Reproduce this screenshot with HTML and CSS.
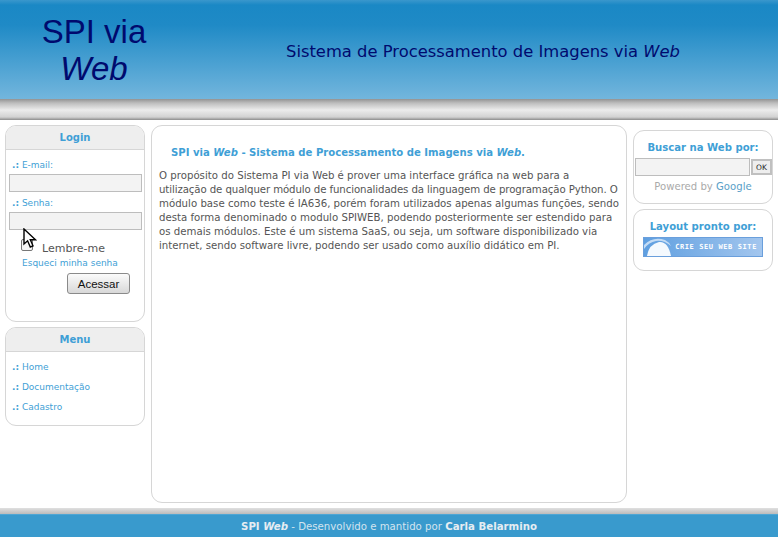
FILE: index.html
```html
<!DOCTYPE html>
<html lang="en">
<head>
    <meta charset="UTF-8">
    <title>SPI via Web</title>
    <link rel="stylesheet" href="styles.css">
</head>
<body>
    <div class="header">
        <h1 class="logo">SPI via<br><em>Web</em></h1>
        <h2 class="slogan">Sistema de Processamento de Imagens via <em>Web</em></h2>
    </div>
    <div class="header-bar"></div>

    <div class="columns">
        <div class="col-left">
            <div class="box login-box">
                <div class="box-title">Login</div>
                <div class="login-body">
                    <label class="field-label"><b>.:</b> E-mail:</label>
                    <input type="text" class="text-input">
                    <label class="field-label senha"><b>.:</b> Senha:</label>
                    <input type="password" class="text-input">
                    <div class="remember">
                        <span class="check"></span>
                        <span class="remember-text">Lembre-me</span>
                    </div>
                    <a class="forgot" href="#">Esqueci minha senha</a>
                    <div class="submit-row"><button class="submit-btn">Acessar</button></div>
                </div>
                <svg class="cursor" width="14" height="21" viewBox="0 0 14 21">
                    <path d="M1 1 L1 16 L4.6 12.8 L7.3 19 L10 17.8 L7.3 11.8 L12.5 11.8 Z" fill="#fff" stroke="#000" stroke-width="1.4"/>
                </svg>
            </div>
            <div class="box menu-box">
                <div class="box-title">Menu</div>
                <ul class="menu">
                    <li><b>.:</b> <a href="#">Home</a></li>
                    <li><b>.:</b> <a href="#">Documentação</a></li>
                    <li><b>.:</b> <a href="#">Cadastro</a></li>
                </ul>
            </div>
        </div>

        <div class="box col-main">
            <h3 class="main-title">SPI via <em>Web</em> - Sistema de Processamento de Imagens via <em>Web</em>.</h3>
            <p class="main-text">O propósito do Sistema PI via Web é prover uma interface gráfica na web para a<br>
            <span class="line-tight">utilização de qualquer módulo de funcionalidades da linguagem de programação Python. O</span><br>
            módulo base como teste é IA636, porém foram utilizados apenas algumas funções, sendo<br>
            desta forma denominado o modulo SPIWEB, podendo posteriormente ser estendido para<br>
            os demais módulos. Este é um sistema SaaS, ou seja, um software disponibilizado via<br>
            internet, sendo software livre, podendo ser usado como auxílio didático em PI.</p>
        </div>

        <div class="col-right">
            <div class="box search-box">
                <div class="side-title">Buscar na Web por:</div>
                <div class="search-row">
                    <input type="text" class="text-input search-input">
                    <button class="ok-btn">OK</button>
                </div>
                <div class="powered">Powered by <span>Google</span></div>
            </div>
            <div class="box layout-box">
                <div class="side-title">Layout pronto por:</div>
                <div class="banner">
                    <svg class="banner-art" width="32" height="18" viewBox="0 0 32 18">
                        <path d="M0 7 Q9 -2 21 2 Q25 4 27 8 Q20 2 12 3 Q5 4 0 11 Z" fill="#c4dcf5"/>
                        <path d="M3 18 Q5 6 15 4 Q24 3 27 18 Z" fill="#f4f9fe"/>
                    </svg>
                    <span class="banner-text">CRIE SEU WEB SITE</span>
                </div>
            </div>
        </div>
    </div>

    <div class="footer-bar"></div>
    <div class="footer"><b>SPI <em>Web</em></b> - Desenvolvido e mantido por <b>Carla Belarmino</b></div>
</body>
</html>
```

FILE: styles.css
```css
html, body {
    margin: 0;
    padding: 0;
}
body {
    font-family: "DejaVu Sans", Verdana, sans-serif;
    font-size: 10px;
    color: #555;
    background: #fff;
    height: 537px;
    overflow: hidden;
}
a {
    color: #3f9fd6;
    text-decoration: none;
}
.header {
    height: 99px;
    display: flex;
    background: linear-gradient(#3a97cc 0, #1a88c5 5px, #1f8ac6 25px, #73b6dd 99px);
    color: #000a6e;
}
.logo {
    width: 188px;
    margin: 13px 0 0;
    font-family: "Liberation Sans", Arial, sans-serif;
    font-size: 33px;
    line-height: 37px;
    font-weight: normal;
    text-align: center;
}
.slogan {
    margin: 42px 0 0 98px;
    font-size: 16.37px;
    line-height: 20px;
    font-weight: normal;
}
.header-bar {
    height: 21px;
    background: linear-gradient(#939393 0, #bdbdbd 4px, #ececec 11px, #d2d2d2 18px, #8c8c8c 21px);
}
.columns {
    display: flex;
    align-items: flex-start;
    gap: 6px;
    padding: 5px 5px 0;
    height: 383px;
}
.box {
    box-sizing: border-box;
    border: 1px solid #d6d6d6;
    border-radius: 11px;
    background: #fff;
}
.col-left, .col-right {
    width: 140px;
    display: flex;
    flex-direction: column;
    gap: 5px;
}
.col-right {
    padding-top: 5px;
}
.box-title {
    height: 23px;
    line-height: 23px;
    background: #eeeeee;
    border-bottom: 1px solid #d6d6d6;
    border-radius: 10px 10px 0 0;
    text-align: center;
    font-size: 10px;
    font-weight: bold;
    color: #3f9fd6;
}
.login-box {
    position: relative;
    height: 197px;
}
.login-body {
    padding: 9px 3px 0;
}
.field-label {
    display: block;
    padding-left: 3px;
    font-size: 9px;
    line-height: 12px;
    color: #3f9fd6;
}
.field-label b, .menu b {
    color: #3f9fd6;
}
.senha {
    margin-top: 5px;
}
.text-input {
    box-sizing: border-box;
    display: block;
    width: 133px;
    height: 18px;
    margin: 3px 0 0;
    border: 1px solid #bdbdbd;
    background: #f3f3f3;
    padding: 0;
}
.remember {
    display: flex;
    align-items: flex-start;
    gap: 9px;
    margin: 9px 0 0 12px;
    height: 12px;
    font-size: 11px;
    line-height: 13px;
    color: #555;
}
.remember-text {
    margin-top: 3px;
}
.check {
    box-sizing: border-box;
    flex: none;
    width: 12px;
    height: 12px;
    border: 1px solid #777;
    border-radius: 2px;
    background: #f5f5f5;
}
.forgot {
    display: block;
    margin: 5px 0 0 13px;
    font-size: 9px;
    line-height: 14px;
}
.submit-row {
    display: flex;
    justify-content: flex-end;
    padding-right: 11px;
    margin-top: 3px;
}
.submit-btn {
    width: 63px;
    height: 21px;
    padding: 0;
    border: 1px solid #8a8a8a;
    border-radius: 3px;
    background: linear-gradient(#fbfbfb, #d8d8d8);
    font-family: "Liberation Sans", Arial, sans-serif;
    font-size: 11.5px;
    color: #111;
}
.cursor {
    position: absolute;
    left: 17px;
    top: 102px;
}
.menu-box {
    height: 99px;
}
.menu {
    list-style: none;
    margin: 0;
    padding: 5px 0 0 6px;
    font-size: 9px;
}
.menu li {
    height: 20px;
    line-height: 20px;
    color: #3f9fd6;
}
.col-main {
    width: 476px;
    height: 378px;
    padding: 0 7px;
}
.main-title {
    margin: 20px 0 0 12px;
    font-size: 10.1px;
    line-height: 14px;
    font-weight: bold;
    color: #3f9fd6;
}
.main-text {
    margin: 9px 0 0;
    font-size: 10.2px;
    line-height: 14px;
    white-space: nowrap;
    color: #555;
}
.line-tight {
    letter-spacing: -0.1px;
}
.search-box {
    height: 74px;
}
.side-title {
    text-align: center;
    font-size: 10.1px;
    font-weight: bold;
    color: #3f9fd6;
    line-height: 14px;
    padding-top: 10px;
}
.search-row {
    display: flex;
    gap: 1px;
    margin: 3px 0 0 1px;
}
.search-input {
    width: 115px;
    height: 18px;
    margin: 0;
}
.ok-btn {
    box-sizing: border-box;
    width: 21px;
    height: 16px;
    margin-top: 1px;
    padding: 0;
    border: 2px solid #c0c0c0;
    background: #eee;
    font-family: "DejaVu Sans", sans-serif;
    font-size: 7.5px;
    color: #222;
}
.powered {
    margin-top: 4px;
    text-align: center;
    font-size: 10.1px;
    line-height: 14px;
    color: #aaa;
}
.powered span {
    color: #5a9fc8;
}
.layout-box {
    height: 62px;
}
.banner {
    position: relative;
    box-sizing: border-box;
    display: flex;
    align-items: center;
    justify-content: flex-end;
    width: 120px;
    height: 20px;
    margin: 3px 0 0 9px;
    padding-right: 5px;
    border: 1px solid #6a9fdc;
    background: linear-gradient(90deg, #5f9fe0, #a3c6ee);
}
.banner-art {
    position: absolute;
    left: 0;
    bottom: 0;
}
.banner-text {
    font-family: "DejaVu Sans Mono", monospace;
    font-size: 7px;
    font-weight: bold;
    letter-spacing: 0.6px;
    color: #fff;
}
.footer-bar {
    height: 6px;
    background: linear-gradient(#e0e0e0, #bbbbbb);
}
.footer {
    height: 23px;
    padding-top: 3px;
    box-sizing: border-box;
    line-height: 17px;
    background: #399acd;
    border-top: 1px solid #4fa6d4;
    text-align: center;
    font-size: 10.2px;
    color: #d3e4ef;
}
.footer b {
    color: #e6edf2;
}
```
